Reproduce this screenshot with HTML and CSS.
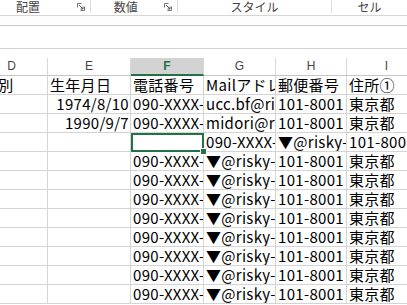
FILE: index.html
```html
<!DOCTYPE html>
<html lang="ja">
<head>
  <meta charset="UTF-8">
  <title>Excel</title>
  <link rel="stylesheet" href="styles.css">
</head>
<body>
  <div class="ribbon">
    <div class="group g1"><span class="label">配置</span><svg class="launcher" width="8" height="8" viewBox="0 0 8 8"><path d="M0.5 0.5h4M0.5 0.5v4M7.5 3.5v4h-4" stroke="#777" fill="none"/><path d="M2 2l4 4M6 3.5v2.5h-2.5" stroke="#555" fill="none"/></svg></div>
    <div class="group g2"><span class="label">数値</span><svg class="launcher" width="8" height="8" viewBox="0 0 8 8"><path d="M0.5 0.5h4M0.5 0.5v4M7.5 3.5v4h-4" stroke="#777" fill="none"/><path d="M2 2l4 4M6 3.5v2.5h-2.5" stroke="#555" fill="none"/></svg></div>
    <div class="group g3"><span class="label">スタイル</span></div>
    <div class="group g4"><span class="label">セル</span></div>
  </div>
  <div class="spacer"></div>
  <div class="formula"></div>
  <div class="gap"></div>

  <div class="viewport">
    <div class="sheet">
      <div class="hd hd-d">D</div><div class="hd">E</div><div class="hd active">F</div><div class="hd">G</div><div class="hd">H</div><div class="hd">I</div>

      <div class="c col-d">性別</div><div class="c">生年月日</div><div class="c">電話番号</div><div class="c">Mailアドレス</div><div class="c">郵便番号</div><div class="c">住所①</div>
      <div class="c"></div><div class="c right">1974/8/10</div><div class="c">090-XXXX-</div><div class="c">ucc.bf@risky</div><div class="c">101-8001</div><div class="c">東京都</div>
      <div class="c"></div><div class="c right">1990/9/7</div><div class="c">090-XXXX-</div><div class="c">midori@risky</div><div class="c">101-8001</div><div class="c">東京都</div>
      <div class="c"></div><div class="c"></div><div class="c selected"><span class="handle"></span></div><div class="c">090-XXXX-</div><div class="c">▼@risky-ir</div><div class="c">101-8001</div>
    </div>
    <div class="sheet" id="rows"></div>
  </div>

  <script>
    const rows = document.getElementById("rows");
    let html = "";
    for (let i = 0; i < 8; i++) {
      html += '<div class="c"></div><div class="c"></div><div class="c">090-XXXX-</div>' +
        '<div class="c">▼@risky-ir</div><div class="c">101-8001</div><div class="c">東京都</div>';
    }
    rows.innerHTML = html;
  </script>
</body>
</html>
```

FILE: styles.css
```css
body {
  margin: 0;
  background: #ffffff;
  font-family: "Noto Sans CJK JP", "Noto Sans", sans-serif;
  overflow: hidden;
}

.ribbon {
  display: flex;
  height: 15px;
  border-bottom: 1px solid #d6d6d6;
  background: #ffffff;
  white-space: nowrap;
}

.group {
  position: relative;
  display: flex;
  align-items: flex-start;
  height: 13px;
  border-right: 1px solid #dcdcdc;
  font-size: 12px;
  line-height: 14px;
  color: #444444;
}

.g1 {
  width: 92px;
  padding-left: 16px;
  box-sizing: border-box;
}

.g2 {
  width: 88px;
  padding-left: 23px;
  box-sizing: border-box;
}

.g3 {
  width: 157px;
  justify-content: center;
  box-sizing: border-box;
}

.g4 {
  width: 76px;
  justify-content: center;
  border-right: none;
  box-sizing: border-box;
}

.launcher {
  position: absolute;
  top: 3px;
  right: 5px;
}

.spacer {
  height: 9px;
  border-bottom: 1px solid #c8c8c8;
  background: #fdfdfd;
}

.formula {
  height: 22px;
  border-bottom: 1px solid #d0d0d0;
}

.gap {
  height: 9px;
}

.viewport {
  width: 407px;
  overflow: hidden;
}

.sheet {
  display: grid;
  grid-template-columns: 72px 83px 73px 72px 71px 80px;
  margin-left: -24px;
  width: 451px;
}

.hd {
  height: 18px;
  box-sizing: border-box;
  border-right: 1px solid #d8d8d8;
  border-bottom: 1px solid #c6c6c6;
  background: #ffffff;
  font-family: "Liberation Sans", Arial, sans-serif;
  font-size: 12px;
  line-height: 17px;
  text-align: center;
  color: #444444;
}

.hd.active {
  background: #d3d3d3;
  color: #217346;
  font-weight: bold;
  border-bottom: 2px solid #217346;
}

.c {
  position: relative;
  height: 19px;
  box-sizing: border-box;
  border-right: 1px solid #d4d4d4;
  border-bottom: 1px solid #d4d4d4;
  padding: 0 1px 0 2px;
  font-size: 15px;
  line-height: 18px;
  letter-spacing: 0.3px;
  color: #000000;
  white-space: nowrap;
  overflow: hidden;
}

.col-d {
  padding-left: 7px;
}

.right {
  text-align: right;
}

.selected {
  overflow: visible;
  outline: 2px solid #217346;
  outline-offset: -2px;
}

.handle {
  position: absolute;
  right: -4px;
  bottom: -4px;
  width: 5px;
  height: 5px;
  background: #217346;
  border: 1px solid #ffffff;
  z-index: 2;
}
```
